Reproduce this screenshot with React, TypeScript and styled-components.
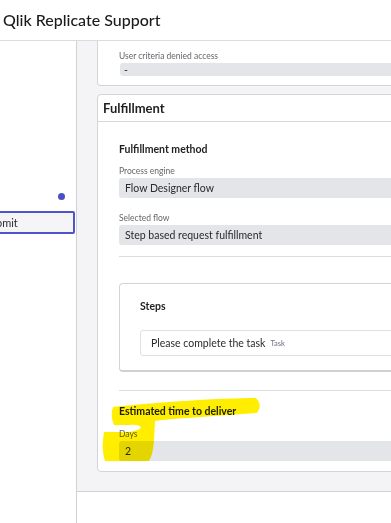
import styled, { createGlobalStyle } from "styled-components";

const GlobalStyle = createGlobalStyle`
  html, body {
    margin: 0;
    padding: 0;
    background: #ffffff;
  }
  body {
    font-family: Lato, "Open Sans", Arial, sans-serif;
    color: #2c2c2e;
  }
  * {
    box-sizing: border-box;
  }
`;

const App: React.FC = () => (
    <>
        <GlobalStyle />
        <Page>
            <Header>
                <Title>Qlik Replicate Support</Title>
            </Header>
            <Body>
                <LeftPane>
                    <DotRow>
                        <Dot />
                    </DotRow>
                    <ButtonRow>
                        <SubmitButton>Submit</SubmitButton>
                    </ButtonRow>
                </LeftPane>

                <Main>
                    <Scroller>
                        {/* top panel, scrolled partly out of view */}
                        <Panel $cut>
                            <PanelBody $top={9} $bottom={9}>
                                <FieldLabel>User criteria denied access</FieldLabel>
                                <ReadOnly $small>-</ReadOnly>
                            </PanelBody>
                        </Panel>

                        <Panel>
                            <PanelHeader>Fulfillment</PanelHeader>
                            <PanelBody $top={20} $bottom={10}>
                                <SectionTitle>Fulfillment method</SectionTitle>
                                <FieldLabel $gap={9}>Process engine</FieldLabel>
                                <ReadOnly>Flow Designer flow</ReadOnly>
                                <FieldLabel $gap={14}>Selected flow</FieldLabel>
                                <ReadOnly>Step based request fulfillment</ReadOnly>

                                <Divider $gap={11} />

                                <StepsCard>
                                    <SectionTitle>Steps</SectionTitle>
                                    <StepItem>
                                        Please complete the task
                                        <StepType>Task</StepType>
                                    </StepItem>
                                </StepsCard>

                                <Divider $gap={18} />

                                <SectionTitle $gap={13}>Estimated time to deliver</SectionTitle>
                                <FieldLabel $gap={10}>Days</FieldLabel>
                                <ReadOnly>2</ReadOnly>
                            </PanelBody>
                        </Panel>
                    </Scroller>
                    <Footer />
                </Main>
            </Body>

            {/* marker highlight drawn over the screenshot */}
            <Highlight viewBox="0 0 391 523" width={391} height={523}>
                <path
                    d="M113 407 C160 402 220 398 256 398 Q263 405 257 413 C220 416 180 418 155 421 L154 440 Q153 455 149 461 L105 461 Q101 450 104 432 L118 432 Q135 433 141 428 Q140 424 128 425 L114 425 Q110 416 113 407 Z"
                    fill="#ffee00"
                />
            </Highlight>
        </Page>
    </>
);

export default App;

// Styled Components
const Page = styled.div`
    position: relative;
    width: 391px;
    height: 523px;
    overflow: hidden;
    display: flex;
    flex-direction: column;
    background: #ffffff;
`;

const Header = styled.header`
    height: 41px;
    flex-shrink: 0;
    display: flex;
    align-items: center;
    padding: 0 0 2px 3px;
    border-bottom: 1px solid #dcdcdf;
    background: #ffffff;
`;

const Title = styled.h1`
    margin: 0;
    font-size: 16px;
    font-weight: 500;
    color: #1b1b1d;
    white-space: nowrap;
`;

const Body = styled.div`
    flex: 1;
    display: flex;
    min-height: 0;
`;

const LeftPane = styled.aside`
    width: 77px;
    flex-shrink: 0;
    border-right: 1px solid #d2d2d6;
    background: #ffffff;
    display: flex;
    flex-direction: column;
    padding-top: 152px;
    overflow: hidden;
`;

const DotRow = styled.div`
    display: flex;
    justify-content: flex-end;
    padding-right: 11px;
`;

const Dot = styled.span`
    width: 7px;
    height: 7px;
    border-radius: 50%;
    background: #4a4fc4;
`;

const ButtonRow = styled.div`
    display: flex;
    justify-content: flex-end;
    margin-top: 11px;
`;

const SubmitButton = styled.button`
    flex-shrink: 0;
    width: 100px;
    height: 23px;
    margin-right: 1px;
    border: 2px solid #4f55c9;
    border-radius: 2px;
    background: #f5f5f7;
    font-family: Lato, Arial, sans-serif;
    font-size: 11px;
    color: #2c2c2e;
    text-align: left;
    padding: 0 0 0 7px;
`;

const Main = styled.main`
    flex: 1;
    min-width: 0;
    display: flex;
    flex-direction: column;
    background: #f4f4f6;
    overflow: hidden;
`;

const Scroller = styled.div`
    flex: 1;
    padding-left: 20px;
    display: flex;
    flex-direction: column;
    gap: 8px;
`;

const Panel = styled.section<{ $cut?: boolean }>`
    width: 340px;
    background: #ffffff;
    border: 1px solid #d4d4d8;
    border-top: ${(p) => (p.$cut ? "none" : "1px solid #d4d4d8")};
    border-radius: ${(p) => (p.$cut ? "0 0 4px 4px" : "4px")};
`;

const PanelHeader = styled.div`
    height: 27px;
    display: flex;
    align-items: center;
    padding-left: 5px;
    border-bottom: 1px solid #d8d8dc;
    font-size: 13px;
    font-weight: 700;
    color: #1f1f21;
`;

const PanelBody = styled.div<{ $top: number; $bottom: number }>`
    display: flex;
    flex-direction: column;
    align-items: flex-start;
    padding: ${(p) => p.$top}px 0 ${(p) => p.$bottom}px 21px;
`;

const SectionTitle = styled.div<{ $gap?: number }>`
    margin-top: ${(p) => p.$gap ?? 0}px;
    font-size: 10.5px;
    line-height: 14px;
    font-weight: 700;
    color: #1f1f21;
`;

const FieldLabel = styled.div<{ $gap?: number }>`
    margin-top: ${(p) => p.$gap ?? 0}px;
    font-size: 8.5px;
    line-height: 12px;
    color: #66666b;
`;

const ReadOnly = styled.div<{ $small?: boolean }>`
    align-self: stretch;
    margin-top: 1px;
    margin-left: ${(p) => (p.$small ? "1px" : "0")};
    height: ${(p) => (p.$small ? "13px" : "20px")};
    display: flex;
    align-items: center;
    padding-left: ${(p) => (p.$small ? "4px" : "6px")};
    border-radius: 3px 0 0 3px;
    background: #e4e5e9;
    font-size: 10.5px;
    color: #2a2a2c;
`;

const Divider = styled.hr<{ $gap: number }>`
    align-self: stretch;
    margin: ${(p) => p.$gap}px 0 0;
    border: none;
    border-top: 1px solid #dcdce0;
`;

const StepsCard = styled.div`
    align-self: stretch;
    margin-top: 26px;
    height: 89px;
    display: flex;
    flex-direction: column;
    align-items: flex-start;
    padding: 15px 0 0 20px;
    border: 1px solid #d4d4d8;
    border-bottom: 2px solid #cfcfd4;
    border-radius: 4px 0 0 4px;
`;

const StepItem = styled.div`
    align-self: stretch;
    margin-top: 17px;
    height: 26px;
    display: flex;
    align-items: center;
    gap: 5px;
    padding-left: 10px;
    border: 1px solid #e0e0e4;
    border-radius: 3px 0 0 3px;
    background: #ffffff;
    font-size: 10.5px;
    color: #2a2a2c;
`;

const StepType = styled.span`
    font-size: 7.5px;
    color: #6c6f86;
`;

const Footer = styled.footer`
    height: 32px;
    flex-shrink: 0;
    background: #ffffff;
    border-top: 1px solid #d2d2d6;
`;

const Highlight = styled.svg`
    position: absolute;
    left: 0;
    top: 0;
    pointer-events: none;
    mix-blend-mode: multiply;
`;
